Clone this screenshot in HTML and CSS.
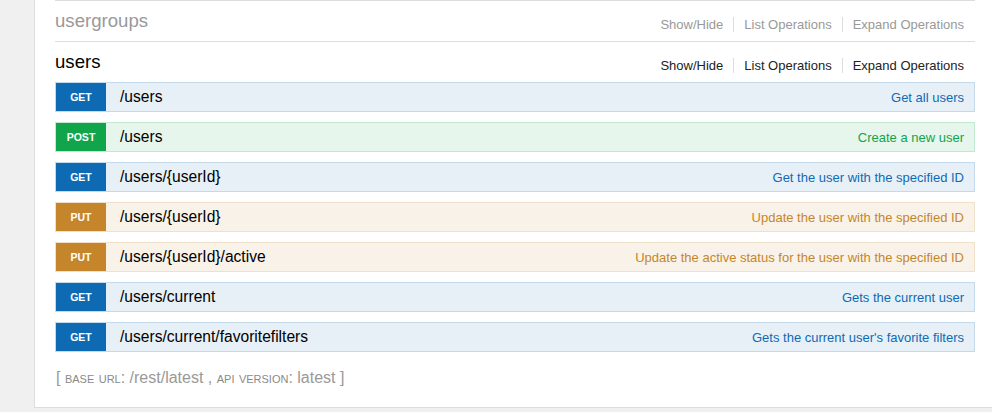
FILE: index.html
```html
<!DOCTYPE html>
<html lang="en">
<head>
    <meta charset="UTF-8">
    <meta name="viewport" content="width=device-width, initial-scale=1.0">
    <title>API docs - users</title>
    <link rel="stylesheet" href="styles.css">
</head>
<body>
    <div class="panel">
        <ul class="resources">
            <!-- collapsed resource -->
            <li class="resource">
                <div class="heading">
                    <h2>usergroups</h2>
                    <ul class="options">
                        <li>Show/Hide</li>
                        <li>List Operations</li>
                        <li>Expand Operations</li>
                    </ul>
                </div>
            </li>

            <!-- open resource -->
            <li class="resource active">
                <div class="heading">
                    <h2>users</h2>
                    <ul class="options">
                        <li>Show/Hide</li>
                        <li>List Operations</li>
                        <li>Expand Operations</li>
                    </ul>
                </div>
                <ul class="endpoints">
                    <li class="endpoint get">
                        <span class="method">GET</span>
                        <span class="path">/users</span>
                        <span class="desc">Get all users</span>
                    </li>
                    <li class="endpoint post">
                        <span class="method">POST</span>
                        <span class="path">/users</span>
                        <span class="desc">Create a new user</span>
                    </li>
                    <li class="endpoint get">
                        <span class="method">GET</span>
                        <span class="path">/users/{userId}</span>
                        <span class="desc">Get the user with the specified ID</span>
                    </li>
                    <li class="endpoint put">
                        <span class="method">PUT</span>
                        <span class="path">/users/{userId}</span>
                        <span class="desc">Update the user with the specified ID</span>
                    </li>
                    <li class="endpoint put">
                        <span class="method">PUT</span>
                        <span class="path">/users/{userId}/active</span>
                        <span class="desc">Update the active status for the user with the specified ID</span>
                    </li>
                    <li class="endpoint get">
                        <span class="method">GET</span>
                        <span class="path">/users/current</span>
                        <span class="desc">Gets the current user</span>
                    </li>
                    <li class="endpoint get">
                        <span class="method">GET</span>
                        <span class="path">/users/current/favoritefilters</span>
                        <span class="desc">Gets the current user's favorite filters</span>
                    </li>
                </ul>
            </li>
        </ul>

        <!-- Footer with base url and version -->
        <div class="footer">
            [ <span class="sc">base url</span>: /rest/latest , <span class="sc">api version</span>: latest ]
        </div>
    </div>
</body>
</html>
```

FILE: styles.css
```css
html, body {
    margin: 0;
    padding: 0;
    overflow: hidden;
}
body {
    font-family: "Liberation Sans", Arial, sans-serif;
    background-color: #f0f0f0;
}
.panel {
    margin-left: 34px;
    width: 1000px;
    height: 408px;
    box-sizing: border-box;
    padding: 0 20px;
    background-color: #fff;
    border-left: 1px solid #ddd;
    border-bottom: 1px solid #ddd;
}
.resources {
    list-style: none;
    margin: 0;
    padding: 0;
    width: 920px;
}
.resource {
    border-top: 1px solid #ddd;
}
/* resource heading */
.heading {
    display: flex;
    justify-content: space-between;
    align-items: flex-start;
    height: 40px;
}
.heading h2 {
    margin: 0;
    font-size: 18.6px;
    font-weight: normal;
    line-height: 40px;
    color: #999;
}
.options {
    list-style: none;
    display: flex;
    margin: 16px 11px 0 0;
    padding: 0;
    font-size: 13px;
    line-height: 15px;
    color: #999;
}
.options li {
    padding: 0 10px;
    border-right: 1px solid #ddd;
}
.options li:last-child {
    padding-right: 0;
    border-right: none;
}
.active .heading h2 {
    color: #000;
}
.active .options {
    color: #222;
}
/* operations */
.endpoints {
    list-style: none;
    margin: 0;
    padding: 0;
}
.endpoint {
    display: flex;
    align-items: center;
    height: 28px;
    margin-bottom: 10px;
    border: 1px solid;
}
.method {
    width: 50px;
    height: 28px;
    line-height: 28px;
    text-align: center;
    color: #fff;
    font-size: 10.5px;
    font-weight: bold;
}
.path {
    flex: 1;
    padding-left: 14px;
    font-size: 15.6px;
    color: #000;
}
.desc {
    padding-right: 10px;
    font-size: 13px;
}
.get {
    background-color: #e7f0f7;
    border-color: #c3d9ec;
}
.get .method {
    background-color: #0f6ab4;
}
.get .desc {
    color: #0f6ab4;
}
.post {
    background-color: #e7f6ec;
    border-color: #c3e8d1;
}
.post .method {
    background-color: #10a54a;
}
.post .desc {
    color: #10a54a;
}
.put {
    background-color: #f9f2e9;
    border-color: #f0e0ca;
}
.put .method {
    background-color: #c5862b;
}
.put .desc {
    color: #c5862b;
}
/* footer */
.footer {
    margin-top: 16px;
    padding-left: 1px;
    font-size: 16px;
    line-height: 20px;
    color: #999;
}
.sc {
    font-variant: small-caps;
    color: #8a8a8a;
}
```
